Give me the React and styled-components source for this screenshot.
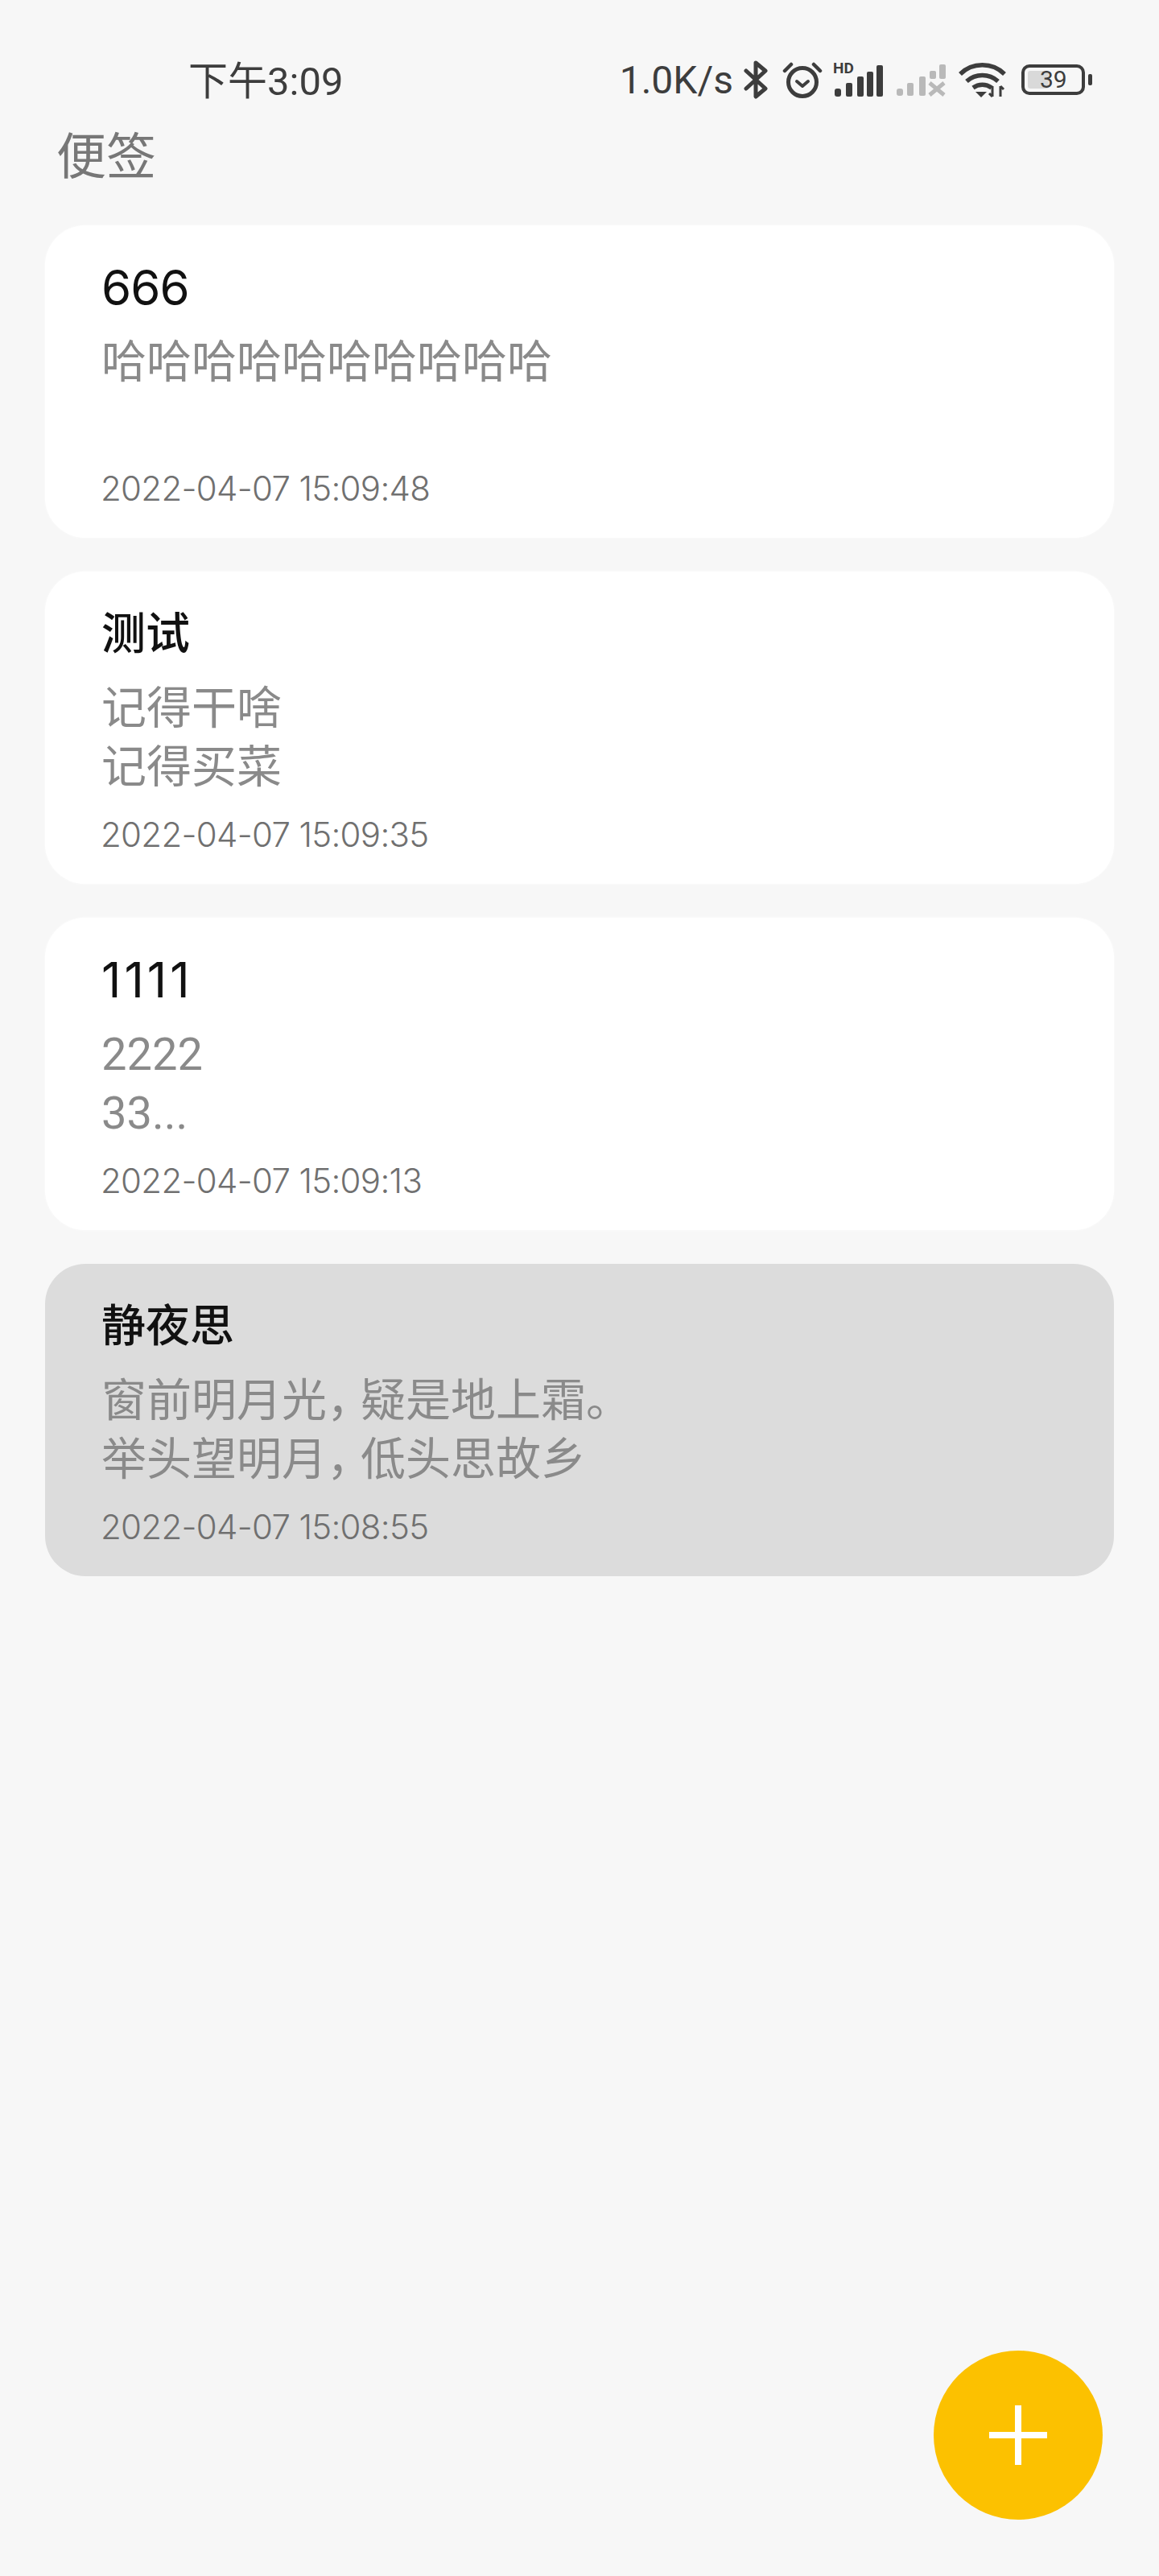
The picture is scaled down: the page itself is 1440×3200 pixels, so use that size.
import React from 'react'
import styled, { createGlobalStyle } from 'styled-components'

const notes = [
  { title: '666', tracking: '-1px', body: ['哈哈哈哈哈哈哈哈哈哈'], date: '2022-04-07 15:09:48' },
  { title: '测试', body: ['记得干啥', '记得买菜'], date: '2022-04-07 15:09:35' },
  { title: '1111', tracking: '4px', body: ['2222', '33...'], date: '2022-04-07 15:09:13' },
  { title: '静夜思', body: ['窗前明月光，疑是地上霜。', '举头望明月，低头思故乡'], date: '2022-04-07 15:08:55', pressed: true },
]

// the comma in the picture is narrower than a full CJK cell
const BodyLine = ({ text }) => {
  const parts = text.split('，')
  if (parts.length === 1) return <div>{text}</div>
  return (
    <div>
      {parts[0]}
      <Comma>，</Comma>
      {parts[1]}
    </div>
  )
}

const App = () => (
  <>
    <GlobalStyle />
    <Page>
      <StatusBar>
        <Clock>下午3:09</Clock>
        <StatusIcons>
          <Speed>1.0K/s</Speed>
          <BluetoothIcon />
          <AlarmIcon />
          <SignalIcon />
          <NoSignalIcon />
          <WifiIcon />
          <Battery>
            <BatteryLevel />
            <BatteryText>39</BatteryText>
          </Battery>
          <BatteryNub />
        </StatusIcons>
      </StatusBar>
      <Title>便签</Title>
      <NoteList>
        {notes.map((note) => (
          <NoteCard key={note.date} $pressed={note.pressed}>
            <NoteTitle $tracking={note.tracking}>{note.title}</NoteTitle>
            <NoteBody>
              {note.body.map((line) => (
                <BodyLine key={line} text={line} />
              ))}
            </NoteBody>
            <NoteDate>{note.date}</NoteDate>
          </NoteCard>
        ))}
      </NoteList>
      <AddButton aria-label="add">
        <svg width="72" height="74" viewBox="0 0 72 74">
          <path d="M36 0v74M0 37h72" stroke="#fff" strokeWidth="8" />
        </svg>
      </AddButton>
    </Page>
  </>
)

export default App

const BluetoothIcon = () => (
  <svg width="30" height="48" viewBox="0 0 30 48" fill="none" stroke="#3d3d3d" strokeWidth="5" strokeLinejoin="round" strokeLinecap="round">
    <path d="M3 13l24 22-12 10V3l12 10L3 35" />
  </svg>
)

const AlarmIcon = () => (
  <AlarmSvg width="50" height="46" viewBox="0 0 50 46" fill="none" stroke="#3d3d3d" strokeLinecap="round">
    <circle cx="25" cy="26" r="17.5" strokeWidth="5" />
    <path d="M18 25l7 6 7-6" strokeWidth="4" strokeLinejoin="round" />
    <path d="M3 12l8-8M47 12l-8-8" strokeWidth="4.5" />
  </AlarmSvg>
)

const SignalIcon = () => (
  <svg width="64" height="54" viewBox="0 -6 64 54">
    <text x="1" y="13" fontFamily="Roboto, sans-serif" fontSize="19" fontWeight="700" fill="#3d3d3d">HD</text>
    <g fill="#3d3d3d">
      <rect x="3" y="32" width="8" height="10" rx="3" />
      <rect x="17" y="25" width="8" height="17" rx="2" />
      <rect x="31" y="17" width="8" height="25" rx="2" />
      <rect x="43" y="11" width="8" height="31" rx="2" />
      <rect x="55" y="3" width="8" height="39" rx="2" />
    </g>
  </svg>
)

const NoSignalIcon = () => (
  <svg width="61" height="42" viewBox="0 0 61 42">
    <g fill="#b9b9b9">
      <rect x="0" y="32" width="8" height="9" rx="3" />
      <rect x="13" y="25" width="8" height="16" rx="2" />
      <rect x="28" y="17" width="8" height="24" rx="2" />
      <rect x="41" y="10" width="8" height="10" rx="2" />
      <rect x="53" y="2" width="8" height="18" rx="2" />
    </g>
    <path d="M41 25l18 15M59 25L41 40" stroke="#b9b9b9" strokeWidth="5" />
  </svg>
)

const WifiIcon = () => (
  <svg width="59" height="44" viewBox="0 0 59 44" fill="none" stroke="#3d3d3d" strokeWidth="5.5">
    <path d="M2 15C17 0 42 0 57 15" />
    <path d="M10 24c11-10 28-10 39 0" />
    <path d="M18 32c7-5 16-5 23 0" />
    <path d="M21 37h14l-7 7z" fill="#3d3d3d" stroke="none" />
    <path d="M42 30v13M38 39l4 4M52 43V30M52 30l4 4" strokeWidth="3" />
  </svg>
)

const GlobalStyle = createGlobalStyle`
  body {
    margin: 0;
    background: #f7f7f7;
    font-family: Roboto, "Noto Sans CJK SC", sans-serif;
  }
`

const Page = styled.div`
  position: relative;
  height: 3200px;
  overflow: hidden;
  background: #f7f7f7;
`

const StatusBar = styled.div`
  display: flex;
  align-items: center;
  justify-content: space-between;
  height: 56px;
  padding: 70px 83px 0 234px;
`

const Clock = styled.div`
  font-size: 49px;
  margin-top: -4px;
  color: #3d3d3d;
`

const StatusIcons = styled.div`
  display: flex;
  align-items: center;
  gap: 16px;
  padding-top: 2px;
`

const Speed = styled.div`
  font-size: 48px;
  color: #3d3d3d;
  margin-right: -3px;
`

const AlarmSvg = styled.svg`
  margin: 0 -4px 0 2px;
`

const Battery = styled.div`
  position: relative;
  box-sizing: border-box;
  width: 79px;
  height: 38px;
  border: 4px solid #3d3d3d;
  border-radius: 10px;
  margin-left: 3px;
`

const BatteryLevel = styled.div`
  position: absolute;
  left: 4px;
  top: 4px;
  bottom: 4px;
  width: 26px;
  border-radius: 3px;
  background: #d9d9d9;
`

const BatteryText = styled.div`
  position: absolute;
  left: 19px;
  top: -4px;
  font-size: 30px;
  line-height: 38px;
  color: #3d3d3d;
`

const BatteryNub = styled.div`
  width: 5px;
  height: 14px;
  border-radius: 2px;
  background: #3d3d3d;
  margin-left: -12px;
`

const Title = styled.div`
  margin: 28px 0 0 70px;
  font-size: 62px;
  line-height: 84px;
  color: #777;
`

const NoteList = styled.div`
  display: flex;
  flex-direction: column;
  gap: 42px;
  margin: 42px 56px 0;
`

const NoteCard = styled.div`
  box-sizing: border-box;
  height: 388px;
  padding: 42px 70px 0;
  border-radius: 50px;
  background: ${(p) => (p.$pressed ? '#dcdcdc' : '#fff')};
  box-shadow: ${(p) => (p.$pressed ? 'none' : '0 0 3px rgba(255, 255, 255, 0.9)')};
`

const NoteTitle = styled.div`
  font-family: ${(p) => (p.$tracking ? 'Inter, ' : '')}Roboto, "Noto Sans CJK SC", sans-serif;
  font-size: ${(p) => (p.$tracking ? '60px' : '55px')};
  font-weight: ${(p) => (p.$tracking ? 400 : 500)};
  letter-spacing: ${(p) => p.$tracking || '0'};
  line-height: 70px;
  color: #111;
`

const NoteBody = styled.div`
  height: 146px;
  margin-top: 22px;
  font-size: 56px;
  line-height: 73px;
  color: #8a8a8a;
`

const Comma = styled.span`
  letter-spacing: -14px;
`

const NoteDate = styled.div`
  margin-top: 17px;
  margin-left: -1px;
  font-family: Inter, Roboto, sans-serif;
  font-size: 42px;
  font-weight: 300;
  letter-spacing: -0.7px;
  line-height: 60px;
  color: #707070;
`

const AddButton = styled.button`
  position: absolute;
  left: 1160px;
  top: 2920px;
  width: 210px;
  height: 210px;
  display: flex;
  align-items: center;
  justify-content: center;
  padding: 0;
  border: 0;
  border-radius: 50%;
  background: #fcc100;
`
